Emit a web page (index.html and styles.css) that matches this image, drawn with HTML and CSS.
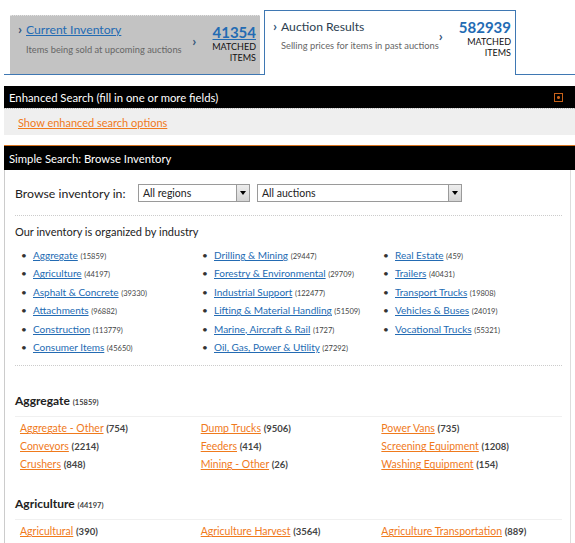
FILE: index.html
```html
<!DOCTYPE html>
<html lang="en">
<head>
  <meta charset="UTF-8">
  <title>Browse Inventory</title>
  <link rel="stylesheet" href="styles.css">
</head>
<body>
  <div class="page">
    <div class="tabs">
      <div class="tab tab-off">
        <div class="tab-main">
          <div class="tab-title"><span class="chev">›</span><a href="#">Current Inventory</a></div>
          <div class="tab-desc">Items being sold at upcoming auctions</div>
        </div>
        <span class="chev chev-count">›</span>
        <div class="tab-count">
          <a href="#" class="num">41354</a>
          <div class="matched">MATCHED<br>ITEMS</div>
        </div>
      </div>
      <div class="tab tab-on">
        <div class="tab-main">
          <div class="tab-title"><span class="chev">›</span>Auction Results</div>
          <div class="tab-desc">Selling prices for items in past auctions</div>
        </div>
        <span class="chev chev-count">›</span>
        <div class="tab-count">
          <span class="num">582939</span>
          <div class="matched">MATCHED<br>ITEMS</div>
        </div>
      </div>
    </div>

    <div class="bar">
      <span>Enhanced Search (fill in one or more fields)</span>
      <span class="expand"></span>
    </div>
    <div class="enhanced">
      <a href="#" class="orange">Show enhanced search options</a>
    </div>

    <div class="bar bar-simple">Simple Search: Browse Inventory</div>
    <div class="panel">
      <div class="browse">
        <span class="browse-label">Browse inventory in:</span>
        <div class="select sel-regions">All regions<span class="arrow"></span></div>
        <div class="select sel-auctions">All auctions<span class="arrow"></span></div>
      </div>

      <div class="sep"></div>
      <div class="intro">Our inventory is organized by industry</div>
      <div class="industries">
        <ul>
          <li><a href="#">Aggregate</a> <span class="cnt">(15859)</span></li>
          <li><a href="#">Agriculture</a> <span class="cnt">(44197)</span></li>
          <li><a href="#">Asphalt &amp; Concrete</a> <span class="cnt">(39330)</span></li>
          <li><a href="#">Attachments</a> <span class="cnt">(96882)</span></li>
          <li><a href="#">Construction</a> <span class="cnt">(113779)</span></li>
          <li><a href="#">Consumer Items</a> <span class="cnt">(45650)</span></li>
        </ul>
        <ul>
          <li><a href="#">Drilling &amp; Mining</a> <span class="cnt">(29447)</span></li>
          <li><a href="#">Forestry &amp; Environmental</a> <span class="cnt">(29709)</span></li>
          <li><a href="#">Industrial Support</a> <span class="cnt">(122477)</span></li>
          <li><a href="#">Lifting &amp; Material Handling</a> <span class="cnt">(51509)</span></li>
          <li><a href="#">Marine, Aircraft &amp; Rail</a> <span class="cnt">(1727)</span></li>
          <li><a href="#">Oil, Gas, Power &amp; Utility</a> <span class="cnt">(27292)</span></li>
        </ul>
        <ul>
          <li><a href="#">Real Estate</a> <span class="cnt">(459)</span></li>
          <li><a href="#">Trailers</a> <span class="cnt">(40431)</span></li>
          <li><a href="#">Transport Trucks</a> <span class="cnt">(19808)</span></li>
          <li><a href="#">Vehicles &amp; Buses</a> <span class="cnt">(24019)</span></li>
          <li><a href="#">Vocational Trucks</a> <span class="cnt">(55321)</span></li>
        </ul>
      </div>
      <div class="sep"></div>

      <div class="group">
        <h3>Aggregate <span class="cnt">(15859)</span></h3>
        <div class="subcats">
          <ul>
            <li><a href="#" class="orange">Aggregate - Other</a> <b>(754)</b></li>
            <li><a href="#" class="orange">Conveyors</a> <b>(2214)</b></li>
            <li><a href="#" class="orange">Crushers</a> <b>(848)</b></li>
          </ul>
          <ul>
            <li><a href="#" class="orange">Dump Trucks</a> <b>(9506)</b></li>
            <li><a href="#" class="orange">Feeders</a> <b>(414)</b></li>
            <li><a href="#" class="orange">Mining - Other</a> <b>(26)</b></li>
          </ul>
          <ul>
            <li><a href="#" class="orange">Power Vans</a> <b>(735)</b></li>
            <li><a href="#" class="orange">Screening Equipment</a> <b>(1208)</b></li>
            <li><a href="#" class="orange">Washing Equipment</a> <b>(154)</b></li>
          </ul>
        </div>
      </div>

      <div class="group">
        <h3>Agriculture <span class="cnt">(44197)</span></h3>
        <div class="subcats">
          <ul>
            <li><a href="#" class="orange">Agricultural</a> <b>(390)</b></li>
          </ul>
          <ul>
            <li><a href="#" class="orange">Agriculture Harvest</a> <b>(3564)</b></li>
          </ul>
          <ul>
            <li><a href="#" class="orange">Agriculture Transportation</a> <b>(889)</b></li>
          </ul>
        </div>
      </div>
    </div>
  </div>
</body>
</html>
```

FILE: styles.css
```css
body {
  margin: 0;
  padding: 0;
  font-family: Lato, "Liberation Sans", sans-serif;
  font-size: 11px;
  color: #222;
  background-color: #fff;
}

a {
  color: #236bb3;
}

.orange {
  color: #f07a1c;
}

.page {
  padding-left: 4px;
}

/* top tabs */

.tabs {
  display: flex;
  align-items: flex-end;
  padding-top: 10px;
  border-bottom: 1px solid #3f78b3;
}

.tab {
  display: flex;
  align-items: flex-start;
  box-sizing: border-box;
}

.tab-off {
  margin-left: 6px;
  width: 250px;
  height: 59px;
  padding: 5px 4px 0 8px;
  background-color: #c3c3c3;
  border-top: 1px dotted #e2e2e2;
}

.tab-off .tab-desc {
  margin-top: 6px;
}

.tab-on {
  margin-left: 4px;
  margin-bottom: -1px;
  width: 252px;
  height: 65px;
  padding: 7px 4px 0 8px;
  background-color: #fff;
  border: 1px solid #3f78b3;
  border-bottom: none;
}

.tab-on .tab-desc {
  margin-top: 5px;
}

.tab-main {
  flex: 1;
  white-space: nowrap;
}

.chev {
  display: inline-block;
  width: 8px;
  font-size: 14px;
  font-weight: bold;
  color: #34557a;
}

.tab-title {
  font-size: 12.2px;
  line-height: 16px;
  color: #2c3e50;
}

.tab-desc {
  padding-left: 8px;
  font-size: 9.3px;
  color: #666;
}

.chev-count {
  margin-top: 9px;
  width: 20px;
}

.tab-off .chev-count {
  margin-top: 11px;
}

.tab-off .tab-count {
  margin-top: 2px;
}

.tab-count {
  text-align: right;
}

.num {
  font-size: 15px;
  font-weight: bold;
  line-height: 18px;
  color: #236bb3;
}

.matched {
  font-size: 9px;
  line-height: 11px;
  color: #111;
}

/* black bars */

.bar {
  display: flex;
  justify-content: space-between;
  align-items: center;
  height: 22px;
  margin-top: 11px;
  padding: 0 12px 0 5px;
  background-color: #000;
  color: #fff;
  font-size: 11.3px;
}

.expand {
  width: 7px;
  height: 7px;
  border: 1px solid #c8621a;
  background: radial-gradient(circle, #c8621a 0 1px, transparent 2px);
}

.enhanced {
  height: 27px;
  padding-left: 14px;
  line-height: 27px;
  background-color: #efefef;
  border-top: 1px dotted #bbb;
  box-sizing: border-box;
}

.bar-simple {
  margin-top: 10px;
  height: 24px;
  border-top: 1px solid #d8731f;
}

/* browse panel */

.panel {
  margin-right: 4px;
  padding: 14px 8px 10px 10px;
  border-left: 1px solid #ccc;
  border-right: 1px solid #ddd;
}

.browse {
  display: flex;
  align-items: center;
  height: 18px;
}

.browse-label {
  width: 123px;
  font-size: 12.3px;
}

.select {
  position: relative;
  box-sizing: border-box;
  height: 18px;
  padding-left: 4px;
  line-height: 16px;
  border: 1px solid #9a9a9a;
  font-size: 10.5px;
}

.sel-regions {
  width: 112px;
  margin-right: 7px;
}

.sel-auctions {
  width: 205px;
}

.arrow {
  position: absolute;
  top: 0;
  right: 0;
  width: 13px;
  height: 16px;
  box-sizing: border-box;
  border-left: 1px solid #9a9a9a;
  background: linear-gradient(#eee, #d4d4d4);
}

.arrow::after {
  content: "";
  position: absolute;
  left: 3px;
  top: 6px;
  border-left: 3px solid transparent;
  border-right: 3px solid transparent;
  border-top: 4px solid #000;
}

.sep {
  margin-top: 13px;
  border-top: 1px dotted #ccc;
}

.intro {
  margin-top: 9px;
  line-height: 14px;
}

.industries {
  display: flex;
  margin-top: 7px;
}

.industries ul,
.subcats ul {
  width: 181px;
  margin: 0;
  padding: 0;
  list-style: none;
}

.industries li {
  height: 18.4px;
  line-height: 18px;
  font-size: 10px;
  white-space: nowrap;
}

.industries li::before {
  content: "•";
  display: inline-block;
  width: 18px;
  padding-left: 6px;
  box-sizing: border-box;
  color: #333;
}

.cnt {
  font-size: 7.5px;
  color: #444;
}

.industries + .sep {
  margin-top: 9px;
}

.group h3 {
  margin: 27px 0 0;
  padding-bottom: 5px;
  font-size: 12px;
  line-height: 16px;
  color: #222;
  border-bottom: 1px solid #f0f0f0;
}

.group + .group h3 {
  margin-top: 23px;
}

.subcats {
  display: flex;
  margin-top: 2px;
  padding-left: 5px;
}

.subcats li {
  height: 18px;
  line-height: 18px;
  font-size: 10.5px;
  white-space: nowrap;
}

.subcats b {
  font-size: 9.5px;
  color: #444;
}
```
